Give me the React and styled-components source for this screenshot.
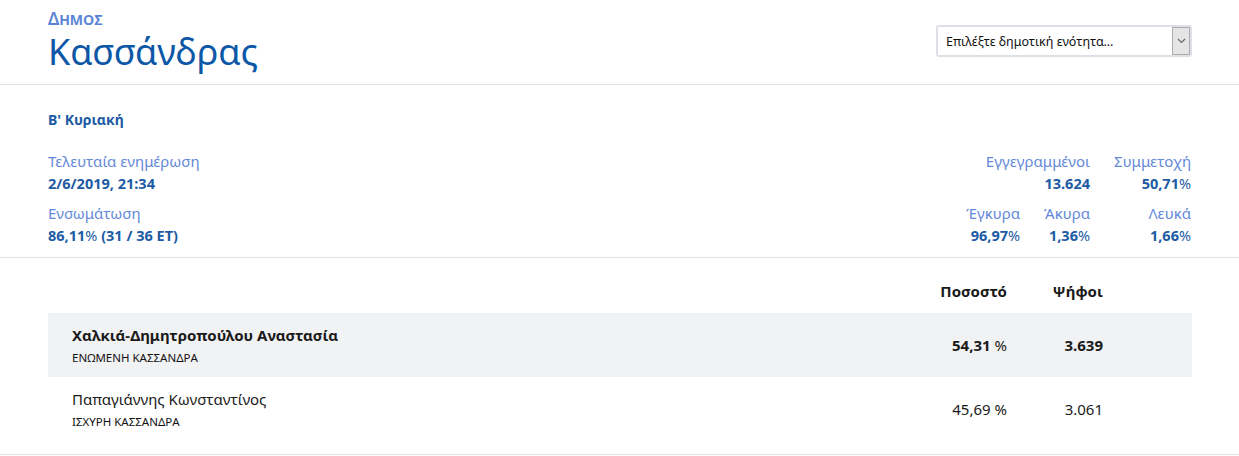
import styled, { createGlobalStyle } from "styled-components";

const GlobalStyle = createGlobalStyle`
	html, body {
		margin: 0;
		padding: 0;
		background: #ffffff;
	}
	body {
		font-family: "Noto Sans", "Open Sans", sans-serif;
		color: #1f1f1f;
	}
	* {
		box-sizing: border-box;
	}
`;

const stats = [
	[
		{ label: "Εγγεγραμμένοι", value: "13.624" },
		{ label: "Συμμετοχή", value: "50,71", pct: true },
	],
	[
		{ label: "Έγκυρα", value: "96,97", pct: true },
		{ label: "Άκυρα", value: "1,36", pct: true },
		{ label: "Λευκά", value: "1,66", pct: true },
	],
];

const candidates = [
	{
		name: "Χαλκιά-Δημητροπούλου Αναστασία",
		party: "ΕΝΩΜΕΝΗ ΚΑΣΣΑΝΔΡΑ",
		pct: "54,31",
		votes: "3.639",
		winner: true,
	},
	{
		name: "Παπαγιάννης Κωνσταντίνος",
		party: "ΙΣΧΥΡΗ ΚΑΣΣΑΝΔΡΑ",
		pct: "45,69",
		votes: "3.061",
	},
];

const App = () => {
	return (
		<>
			<GlobalStyle />
			<Page>
				<Header>
					<div>
						<Kicker>Δημος</Kicker>
						<Title>Κασσάνδρας</Title>
					</div>
					<Select>
						<SelectText>Επιλέξτε δημοτική ενότητα...</SelectText>
						<SelectArrow>
							<svg width="9" height="6" viewBox="0 0 9 6">
								<path d="M1 1l3.5 3.5L8 1" fill="none" stroke="#666" strokeWidth="1.1" />
							</svg>
						</SelectArrow>
					</Select>
				</Header>

				<Info>
					<Round>Β' Κυριακή</Round>
					<InfoGrid>
						<InfoColumn>
							<Stat>
								<Label>Τελευταία ενημέρωση</Label>
								<Value>2/6/2019, 21:34</Value>
							</Stat>
							<Stat>
								<Label>Ενσωμάτωση</Label>
								<Value>
									86,11<Pct>%</Pct> (31 / 36 ΕΤ)
								</Value>
							</Stat>
						</InfoColumn>
						<InfoColumn>
							{stats.map((row, i) => (
								<StatRow key={i}>
									{row.map((s, j) => (
										<Stat key={s.label} $right $last={j === row.length - 1}>
											<Label>{s.label}</Label>
											<Value>
												{s.value}
												{s.pct && <Pct>%</Pct>}
											</Value>
										</Stat>
									))}
								</StatRow>
							))}
						</InfoColumn>
					</InfoGrid>
				</Info>

				<Results>
					<HeadRow>
						<span />
						<HeadCell>Ποσοστό</HeadCell>
						<HeadCell>Ψήφοι</HeadCell>
						<span />
					</HeadRow>
					{candidates.map((c) => (
						<Row key={c.name} $winner={c.winner}>
							<div>
								<Name>{c.name}</Name>
								<Party>{c.party}</Party>
							</div>
							<Num>
								{c.pct} <Pct>%</Pct>
							</Num>
							<Num>{c.votes}</Num>
							<span />
						</Row>
					))}
				</Results>
			</Page>
		</>
	);
};

const Page = styled.div`
	width: 1239px;
	background: #fff;
`;

const Header = styled.header`
	height: 85px;
	padding: 11px 47px 0 48px;
	display: flex;
	justify-content: space-between;
	align-items: flex-start;
	border-bottom: 1px solid #dde2ea;
`;

const Kicker = styled.div`
	font-size: 17px;
	line-height: 16px;
	font-weight: 600;
	font-variant: small-caps;
	color: #5b84d6;
`;

const Title = styled.h1`
	margin: 0;
	font-size: 36px;
	line-height: 50px;
	font-weight: 400;
	color: #0c57a6;
`;

const Select = styled.div`
	margin-top: 14px;
	width: 256px;
	height: 32px;
	display: flex;
	align-items: stretch;
	border: 2px solid #dde0e7;
	border-radius: 3px;
	background: #fff;
`;

const SelectText = styled.div`
	flex: 1;
	padding-left: 8px;
	display: flex;
	align-items: center;
	font-size: 12.5px;
	color: #111;
	white-space: nowrap;
`;

const SelectArrow = styled.div`
	width: 18px;
	display: flex;
	align-items: center;
	justify-content: center;
	background: #e5e5e5;
	border: 1px solid #acacac;
`;

const Info = styled.section`
	padding: 25px 48px 12px;
	border-bottom: 1px solid #e0e3e8;
`;

const Round = styled.div`
	font-size: 14px;
	line-height: 20px;
	font-weight: 700;
	color: #1b5aa5;
	margin-bottom: 21px;
`;

const InfoGrid = styled.div`
	display: flex;
	justify-content: space-between;
`;

const InfoColumn = styled.div`
	display: flex;
	flex-direction: column;
	gap: 10px;
`;

const StatRow = styled.div`
	display: flex;
	justify-content: flex-end;
	gap: 24px;
`;

const Stat = styled.div`
	display: flex;
	flex-direction: column;
	gap: 2px;
	text-align: ${(p) => (p.$right ? "right" : "left")};
	min-width: ${(p) => (p.$last ? "77px" : "0")};
`;

const Label = styled.div`
	font-size: 15px;
	line-height: 20px;
	color: #6489d8;
`;

const Value = styled.div`
	font-size: 14.5px;
	line-height: 20px;
	font-weight: 700;
	color: #1d5ba4;
`;

const Pct = styled.span`
	font-weight: 400;
`;

const Results = styled.section`
	padding: 23px 47px 13px 48px;
	border-bottom: 1px solid #e0e3e8;
`;

const Columns = `
	display: grid;
	grid-template-columns: 1fr 110px 96px 89px;
	align-items: center;
`;

const HeadRow = styled.div`
	${Columns}
	height: 32px;
	align-items: start;
`;

const HeadCell = styled.div`
	font-size: 15px;
	line-height: 20px;
	font-weight: 700;
	color: #1a1a1a;
	text-align: right;
`;

const Row = styled.div`
	${Columns}
	height: 64px;
	padding-left: 24px;
	background: ${(p) => (p.$winner ? "#f1f2f4" : "transparent")};
	font-weight: ${(p) => (p.$winner ? 700 : 400)};
`;

const Name = styled.div`
	font-size: 15px;
	line-height: 20px;
	color: #1a1a1a;
`;

const Party = styled.div`
	margin-top: 5px;
	font-size: 11.5px;
	line-height: 16px;
	font-weight: 400;
	color: #111;
	text-transform: uppercase;
`;

const Num = styled.div`
	font-size: 15px;
	line-height: 20px;
	color: #1a1a1a;
	text-align: right;
`;

export default App;
